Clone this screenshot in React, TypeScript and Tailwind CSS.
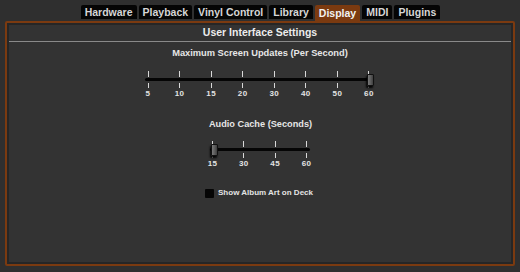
import type { CSSProperties } from "react"

const TABS = ["Hardware", "Playback", "Vinyl Control", "Library", "Display", "MIDI", "Plugins"]
const ACTIVE_TAB = "Display"

type SliderProps = {
	labels: string[]
	span: number
	value: number
}

function TickRow({ count, className }: { count: number; className: string }) {
	return (
		<div className="flex justify-between">
			{Array.from({ length: count }).map((_, i) => (
				<div key={i} className="flex w-0 justify-center">
					<div className={className} />
				</div>
			))}
		</div>
	)
}

function Slider({ labels, span, value }: SliderProps) {
	const handleStyle: CSSProperties = { left: (span * value) / (labels.length - 1) + 1 }

	return (
		<div className="relative px-[3px]" style={{ width: span + 6 }}>
			<TickRow count={labels.length} className="h-[6px] w-px shrink-0 bg-[#d8d8d8]" />
			<div className="-mx-[3px] mt-px h-[3px] rounded-full bg-[#050505]" />
			<TickRow count={labels.length} className="mt-[2px] h-[5px] w-px shrink-0 bg-[#d8d8d8]" />
			<div className="mt-[1px] flex justify-between">
				{labels.map((label) => (
					<div key={label} className="flex w-0 justify-center">
						<span className="text-[8px] font-bold leading-[10px] tracking-[0.4px] text-[#e4e4e4]">{label}</span>
					</div>
				))}
			</div>
			<div
				className="absolute top-[3px] h-[12px] w-[7px] rounded-[1px] border border-[#111] bg-gradient-to-r from-[#7a7a7a] via-[#5e5e5e] to-[#3f3f3f] shadow-[-1px_2px_2px_rgba(0,0,0,0.9)]"
				style={handleStyle}
			/>
		</div>
	)
}

export default function App() {
	return (
		<div
			className="flex h-[272px] w-[520px] flex-col bg-[#2f2f2f] px-[5px] pt-[5px] pb-[6px]"
			style={{ fontFamily: '"Liberation Sans", Arial, sans-serif' }}
		>
			<div className="flex justify-center gap-[2px] pl-[1px]">
				{TABS.map((tab) => (
					<div
						key={tab}
						className={
							tab === ACTIVE_TAB
								? "flex h-[17px] items-start rounded-t-[2px] bg-[#7b3a10] px-[4px] pt-[1px] text-[10.5px] font-bold leading-[14px] text-[#f2f2f2]"
								: "flex h-[14px] items-start rounded-t-[2px] bg-[#050505] px-[4px] pt-[1px] text-[10.5px] font-bold leading-[13px] text-[#d6d6d6]"
						}
					>
						{tab}
					</div>
				))}
			</div>
			<div className="-mt-[1px] flex flex-1 flex-col rounded-[2px] border-2 border-[#7b3a10]">
				<div className="flex flex-1 flex-col items-center border-2 border-[#262626] bg-[#333333]">
					<div className="mt-[1px] text-[10.5px] font-bold leading-[12px] text-[#ececec]">User Interface Settings</div>
					<div className="mt-[3px] h-px w-full bg-[#8a8a8a]" />
					<div className="mt-[6px] text-[9.3px] font-bold leading-[11px] text-[#e6e6e6]">
						Maximum Screen Updates (Per Second)
					</div>
					<div className="mt-[12px] pr-[3px]">
						<Slider labels={["5", "10", "15", "20", "30", "40", "50", "60"]} span={221} value={7} />
					</div>
					<div className="mt-[20px] pl-[1px] text-[9.2px] font-bold leading-[11px] text-[#e6e6e6]">Audio Cache (Seconds)</div>
					<div className="mt-[11px] pr-[1px]">
						<Slider labels={["15", "30", "45", "60"]} span={94} value={0} />
					</div>
					<label className="mt-[19px] flex items-center gap-[4px] pr-[2px]">
						<span className="h-[9px] w-[9px] rounded-[1px] bg-[#050505]" />
						<span className="text-[8px] font-bold leading-[10px] text-[#e4e4e4]">Show Album Art on Deck</span>
					</label>
				</div>
			</div>
		</div>
	)
}
